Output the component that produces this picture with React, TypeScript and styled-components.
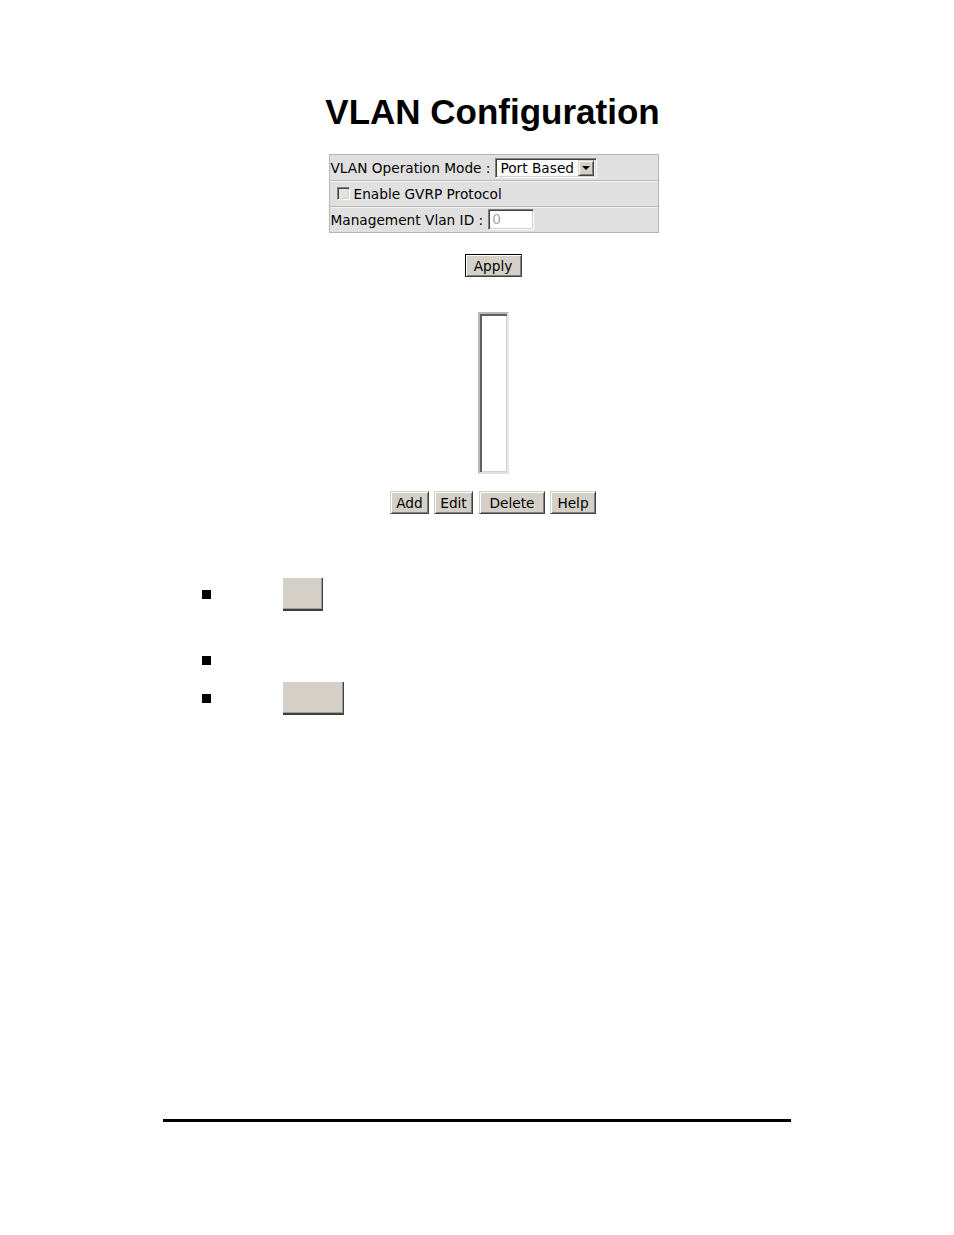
import React from "react";
import styled, { createGlobalStyle } from "styled-components";

const Global = createGlobalStyle`
  html, body { margin: 0; padding: 0; background: #ffffff; }
  body { font-family: "DejaVu Sans", Verdana, sans-serif; }
`;

const Page = styled.div`
  width: 954px;
  height: 1235px;
  padding-top: 92px;
  box-sizing: border-box;
  overflow: hidden;
`;

const Column = styled.div`
  margin-left: 163px;
  width: 660px;
  display: flex;
  flex-direction: column;
  align-items: center;
`;

const Title = styled.h1`
  margin: 0 0 0 -1px;
  font-family: "Liberation Sans", Arial, sans-serif;
  font-weight: bold;
  font-size: 35px;
  line-height: 40px;
  color: #000;
  text-align: center;
`;

const ConfigTable = styled.div`
  margin: 22px 0 0 1px;
  width: 330px;
  box-sizing: border-box;
  border: 1px solid #b4b4b4;
  background: #e0e0e0;
  display: flex;
  flex-direction: column;
`;

const Row = styled.div<{ $first?: boolean }>`
  height: ${(p) => (p.$first ? 25 : 26)}px;
  box-sizing: border-box;
  display: flex;
  align-items: center;
  padding-left: 1px;
  border-top: ${(p) => (p.$first ? "none" : "1px solid #b8b8b8")};
  box-shadow: ${(p) => (p.$first ? "none" : "inset 0 1px 0 #f2f2f2")};
  font-size: 13.7px;
  color: #000;
  white-space: nowrap;
`;

const Label = styled.span<{ $gap: number }>`
  margin-right: ${(p) => p.$gap}px;
`;

const SelectBox = styled.div`
  width: 102px;
  height: 20px;
  box-sizing: border-box;
  border-top: 1px solid #808080;
  border-left: 1px solid #808080;
  border-right: 1px solid #ffffff;
  border-bottom: 1px solid #ffffff;
  box-shadow: inset 1px 1px 0 #404040, inset -1px -1px 0 #d4d0c8;
  background: #fff;
  display: flex;
  align-items: center;
  justify-content: space-between;
  padding: 2px 2px 2px 4px;
  font-size: 13.7px;
`;

const ArrowButton = styled.div`
  width: 16px;
  height: 16px;
  box-sizing: border-box;
  background: #d4d0c8;
  border-top: 1px solid #d4d0c8;
  border-left: 1px solid #d4d0c8;
  border-right: 1px solid #404040;
  border-bottom: 1px solid #404040;
  box-shadow: inset 1px 1px 0 #ffffff, inset -1px -1px 0 #808080;
  display: flex;
  align-items: center;
  justify-content: center;
  &::after {
    content: "";
    border-left: 4px solid transparent;
    border-right: 4px solid transparent;
    border-top: 4px solid #000;
    margin-top: 1px;
  }
`;

const CheckBox = styled.span`
  display: inline-block;
  width: 13px;
  height: 13px;
  box-sizing: border-box;
  margin: 0 4px 0 6px;
  border-top: 1px solid #808080;
  border-left: 1px solid #808080;
  border-right: 1px solid #ffffff;
  border-bottom: 1px solid #ffffff;
  box-shadow: inset 1px 1px 0 #404040, inset -1px -1px 0 #d4d0c8;
  background: #e4e2dc;
`;

const TextInput = styled.div`
  width: 46px;
  height: 21px;
  box-sizing: border-box;
  border-top: 1px solid #808080;
  border-left: 1px solid #808080;
  border-right: 1px solid #ffffff;
  border-bottom: 1px solid #ffffff;
  box-shadow: inset 1px 1px 0 #404040, inset -1px -1px 0 #d4d0c8;
  background: #fff;
  color: #a8a8a8;
  font-size: 13.7px;
  line-height: 19px;
  padding-left: 3px;
`;

const Button = styled.div<{ $w: number; $default?: boolean }>`
  width: ${(p) => p.$w}px;
  height: 23px;
  box-sizing: border-box;
  background: #d4d0c8;
  font-size: 13.7px;
  color: #000;
  display: flex;
  align-items: center;
  justify-content: center;
  border: 1px solid ${(p) => (p.$default ? "#000" : "#d4d0c8")};
  border-right-color: #404040;
  border-bottom-color: #404040;
  box-shadow: inset 1px 1px 0 #ffffff, inset -1px -1px 0 #808080;
`;

const ApplyWrap = styled.div`
  margin-top: 21px;
`;

const ListBox = styled.div`
  margin: 35px 0 0 1px;
  width: 31px;
  height: 162px;
  box-sizing: border-box;
  background: #fff;
  border-top: 2px solid #b8b8b8;
  border-left: 2px solid #b8b8b8;
  border-right: 2px solid #e8e8e8;
  border-bottom: 2px solid #e0e0e0;
  box-shadow: inset 2px 2px 0 #606060, inset -1px -1px 0 #d4d0c8;
`;

const ButtonRow = styled.div`
  margin-top: 17px;
  display: flex;
  gap: 5px;
`;

const BulletList = styled.div`
  margin-top: 64px;
  align-self: stretch;
  display: flex;
  flex-direction: column;
`;

const Item = styled.div<{ $mt: number; $h: number }>`
  margin-top: ${(p) => p.$mt}px;
  height: ${(p) => p.$h}px;
  padding-left: 39px;
  display: flex;
  align-items: center;
`;

const Square = styled.span`
  width: 9px;
  height: 9px;
  background: #000;
  margin-top: -1px;
`;

const ImageButton = styled.div<{ $w: number }>`
  margin-left: 72px;
  width: ${(p) => p.$w}px;
  height: 33px;
  box-sizing: border-box;
  background: #d4d0c8;
  border-right: 1px solid #404040;
  border-bottom: 2px solid #404040;
  box-shadow: inset -1px -1px 0 #a09c94;
`;

const FooterRule = styled.div`
  margin-top: 404px;
  margin-left: 163px;
  width: 628px;
  height: 3px;
  background: #000;
`;

export default function App() {
  return (
    <>
      <Global />
      <Page>
        <Column>
          <Title>VLAN Configuration</Title>
          <ConfigTable>
            <Row $first>
              <Label $gap={5}>VLAN Operation Mode :</Label>
              <SelectBox>
                <span>Port Based</span>
                <ArrowButton />
              </SelectBox>
            </Row>
            <Row>
              <CheckBox />
              <span>Enable GVRP Protocol</span>
            </Row>
            <Row>
              <Label $gap={5}>Management Vlan ID :</Label>
              <TextInput>0</TextInput>
            </Row>
          </ConfigTable>
          <ApplyWrap>
            <Button $w={57} $default>
              Apply
            </Button>
          </ApplyWrap>
          <ListBox />
          <ButtonRow>
            <Button $w={39}>Add</Button>
            <Button $w={39}>Edit</Button>
            <Button $w={66} style={{ marginLeft: 1 }}>
              Delete
            </Button>
            <Button $w={46}>Help</Button>
          </ButtonRow>
          <BulletList>
            <Item $mt={0} $h={33}>
              <Square />
              <ImageButton $w={40} />
            </Item>
            <Item $mt={39} $h={21}>
              <Square />
            </Item>
            <Item $mt={11} $h={33}>
              <Square />
              <ImageButton $w={61} />
            </Item>
          </BulletList>
        </Column>
        <FooterRule />
      </Page>
    </>
  );
}
